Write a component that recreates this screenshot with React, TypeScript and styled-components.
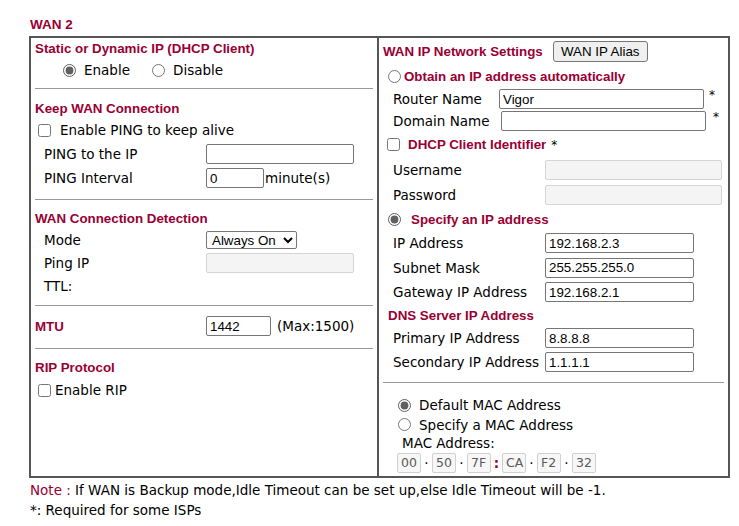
import styled, {createGlobalStyle} from "styled-components";

const GlobalStyle = createGlobalStyle`
  body {
    margin: 0;
    background: #ffffff;
    font-family: "DejaVu Sans", Verdana, sans-serif;
    font-size: 13.5px;
    color: #000000;
  }
  input[type="radio"], input[type="checkbox"] {
    margin: 0;
    width: 13px;
    height: 13px;
    accent-color: #5f5f5f;
  }
`;

const Page = styled.div`
  padding: 13px 0 0 29px;
  width: 701px;
`;

const Title = styled.div`
  font-family: "Liberation Sans", Arial, sans-serif;
  font-weight: bold;
  font-size: 13.5px;
  color: #990033;
  height: 23px;
  line-height: 23px;
  padding-left: 1px;
`;

const Table = styled.div`
  display: grid;
  grid-template-columns: 346px 1fr;
  border: 2px solid #565656;
`;

const LeftColumn = styled.div`
  display: flex;
  flex-direction: column;
`;

const RightColumn = styled.div`
  display: flex;
  flex-direction: column;
  border-left: 2px solid #565656;
  padding-bottom: 3px;
`;

const Section = styled.div<{$top?: number; $bottom?: number}>`
  display: flex;
  flex-direction: column;
  padding-top: ${(p) => p.$top ?? 0}px;
  padding-bottom: ${(p) => p.$bottom ?? 0}px;
`;

const Separator = styled.div<{$side?: number}>`
  height: 1px;
  background: #9a9a9a;
  margin: 0 ${(p) => p.$side ?? 4}px;
`;

const Heading = styled.div<{$pad?: number; $h?: number}>`
  font-family: "Liberation Sans", Arial, sans-serif;
  font-weight: bold;
  font-size: 13.33px;
  color: #990033;
  height: ${(p) => p.$h ?? 20}px;
  display: flex;
  align-items: center;
  padding-left: ${(p) => p.$pad ?? 4}px;
  gap: 4px;
`;

const Row = styled.div<{$h?: number; $pad?: number; $gap?: number}>`
  display: flex;
  align-items: center;
  height: ${(p) => p.$h ?? 24}px;
  padding-left: ${(p) => p.$pad ?? 13}px;
  gap: ${(p) => p.$gap ?? 0}px;
  white-space: nowrap;
`;

const Label = styled.span<{$w?: number}>`
  display: inline-block;
  width: ${(p) => (p.$w ? `${p.$w}px` : "auto")};
  flex: none;
`;

const Choice = styled.label<{$gap?: number}>`
  display: inline-flex;
  align-items: center;
  gap: ${(p) => p.$gap ?? 8}px;
`;

const BoldChoice = styled(Choice)`
  font-family: "Liberation Sans", Arial, sans-serif;
  font-weight: bold;
  font-size: 13.33px;
  color: #990033;
`;

const TextBox = styled.input<{$w: number; $h?: number}>`
  box-sizing: border-box;
  width: ${(p) => p.$w}px;
  height: ${(p) => p.$h ?? 20}px;
  border: 1px solid #767676;
  border-radius: 2px;
  padding: 0 3px;
  margin: 0;
  font-family: "Liberation Sans", Arial, sans-serif;
  font-size: 13.33px;
  color: #000;
  background: #fff;
  flex: none;

  &:disabled {
    background: #f4f4f4;
    border-color: #d4d4d4;
  }
`;

const Select = styled.select`
  box-sizing: border-box;
  width: 91px;
  height: 18px;
  margin: 0;
  padding: 0 0 0 1px;
  font-family: "Liberation Sans", Arial, sans-serif;
  font-size: 13.33px;
  border: 1px solid #767676;
  border-radius: 2px;
  background: #fff;
  color: #000;
`;

const AliasButton = styled.button`
  box-sizing: border-box;
  height: 21px;
  width: 95px;
  margin: 0;
  padding: 0;
  border: 1px solid #767676;
  border-radius: 3px;
  background: #efefef;
  font-family: "Liberation Sans", Arial, sans-serif;
  font-size: 13.33px;
  color: #000;
`;

const Star = styled.span<{$gap?: number; $raised?: boolean}>`
  margin-left: ${(p) => p.$gap ?? 5}px;
  font-size: 12px;
  position: relative;
  top: ${(p) => (p.$raised ? -4 : 0)}px;
`;

const Hint = styled.span<{$gap?: number}>`
  margin-left: ${(p) => p.$gap ?? 0}px;
`;

const MacRow = styled.div`
  display: flex;
  align-items: center;
  height: 21px;
  padding-left: 18px;
`;

const MacBox = styled.input`
  box-sizing: border-box;
  width: 24px;
  height: 20px;
  margin: 0;
  padding: 0 0 0 3px;
  border: 1px solid #d0d0d0;
  border-radius: 2px;
  background: #f7f7f7;
  color: #5a5a5a;
  font-family: "DejaVu Sans", Verdana, sans-serif;
  font-size: 12.5px;
`;

const MacSep = styled.span<{$red?: boolean}>`
  width: 11px;
  text-align: center;
  color: ${(p) => (p.$red ? "#990033" : "#000")};
  font-weight: ${(p) => (p.$red ? "bold" : "normal")};
`;

const Notes = styled.div`
  line-height: 20px;
  padding-top: 2px;
  padding-left: 1px;
`;

const NoteTag = styled.span`
  color: #990033;
`;

const macParts = ["00", "50", "7F", "CA", "F2", "32"];

export default function App() {
  return (
    <>
      <GlobalStyle />
      <Page>
        <Title>WAN 2</Title>
        <Table>
          <LeftColumn>
            <Section $bottom={7}>
              <Heading $h={21}>Static or Dynamic IP (DHCP Client)</Heading>
              <Row $h={22} $pad={32} $gap={22}>
                <Choice>
                  <input type="radio" name="dhcp" defaultChecked />
                  Enable
                </Choice>
                <Choice>
                  <input type="radio" name="dhcp" />
                  Disable
                </Choice>
              </Row>
            </Section>
            <Separator />
            <Section $top={9} $bottom={9}>
              <Heading>Keep WAN Connection</Heading>
              <Row $pad={7}>
                <Choice $gap={9}>
                  <input type="checkbox" />
                  Enable PING to keep alive
                </Choice>
              </Row>
              <Row>
                <Label $w={162}>PING to the IP</Label>
                <TextBox $w={148} $h={20} />
              </Row>
              <Row>
                <Label $w={162}>PING Interval</Label>
                <TextBox $w={58} defaultValue="0" />
                <Hint $gap={1}>minute(s)</Hint>
              </Row>
            </Section>
            <Separator />
            <Section $top={8} $bottom={8}>
              <Heading>WAN Connection Detection</Heading>
              <Row $h={23}>
                <Label $w={162}>Mode</Label>
                <Select defaultValue="on">
                  <option value="on">Always On</option>
                  <option value="ping">Ping Detect</option>
                </Select>
              </Row>
              <Row $h={23}>
                <Label $w={162}>Ping IP</Label>
                <TextBox $w={148} disabled />
              </Row>
              <Row $h={23}>
                <Label>TTL:</Label>
              </Row>
            </Section>
            <Separator />
            <Section $top={9} $bottom={11}>
              <Row $h={22} $pad={4}>
                <Heading as="span" $pad={0} style={{width: 171}}>
                  MTU
                </Heading>
                <TextBox $w={65} defaultValue="1442" />
                <Hint $gap={6}>(Max:1500)</Hint>
              </Row>
            </Section>
            <Separator />
            <Section $top={8}>
              <Heading $h={21}>RIP Protocol</Heading>
              <Row $pad={7}>
                <Choice $gap={4}>
                  <input type="checkbox" />
                  Enable RIP
                </Choice>
              </Row>
            </Section>
          </LeftColumn>

          <RightColumn>
            <Row $h={26} $pad={4} $gap={10}>
              <Heading as="span" $pad={0}>
                WAN IP Network Settings
              </Heading>
              <AliasButton>WAN IP Alias</AliasButton>
            </Row>
            <Row $pad={9}>
              <BoldChoice $gap={3}>
                <input type="radio" name="ipmode" />
                Obtain an IP address automatically
              </BoldChoice>
            </Row>
            <Row $h={22} $pad={14}>
              <Label $w={106}>Router Name</Label>
              <TextBox $w={205} defaultValue="Vigor" />
              <Star $raised>*</Star>
            </Row>
            <Row $h={22} $pad={14}>
              <Label $w={108}>Domain Name</Label>
              <TextBox $w={205} />
              <Star $raised $gap={7}>
                *
              </Star>
            </Row>
            <Row $h={25} $pad={8}>
              <BoldChoice>
                <input type="checkbox" />
                DHCP Client Identifier
              </BoldChoice>
              <Star>*</Star>
            </Row>
            <Row $h={25} $pad={14}>
              <Label $w={152}>Username</Label>
              <TextBox $w={177} disabled />
            </Row>
            <Row $h={25} $pad={14}>
              <Label $w={152}>Password</Label>
              <TextBox $w={177} disabled />
            </Row>
            <Row $pad={9}>
              <BoldChoice $gap={10}>
                <input type="radio" name="ipmode" defaultChecked />
                Specify an IP address
              </BoldChoice>
            </Row>
            <Row $pad={14}>
              <Label $w={152}>IP Address</Label>
              <TextBox $w={149} defaultValue="192.168.2.3" />
            </Row>
            <Row $h={25} $pad={14}>
              <Label $w={152}>Subnet Mask</Label>
              <TextBox $w={149} defaultValue="255.255.255.0" />
            </Row>
            <Row $pad={14}>
              <Label $w={152}>Gateway IP Address</Label>
              <TextBox $w={149} defaultValue="192.168.2.1" />
            </Row>
            <Heading $h={22} $pad={9}>
              DNS Server IP Address
            </Heading>
            <Row $pad={14}>
              <Label $w={152}>Primary IP Address</Label>
              <TextBox $w={149} defaultValue="8.8.8.8" />
            </Row>
            <Row $pad={14}>
              <Label $w={152}>Secondary IP Address</Label>
              <TextBox $w={149} defaultValue="1.1.1.1" />
            </Row>
            <Section $top={8}>
              <Separator $side={4} />
            </Section>
            <Section $top={12}>
              <Row $h={20} $pad={19}>
                <Choice>
                  <input type="radio" name="mac" defaultChecked />
                  Default MAC Address
                </Choice>
              </Row>
              <Row $h={19} $pad={19}>
                <Choice>
                  <input type="radio" name="mac" />
                  Specify a MAC Address
                </Choice>
              </Row>
              <Row $h={18} $pad={23}>
                <Label>MAC Address:</Label>
              </Row>
              <MacRow>
                {macParts.map((part, i) => (
                  <span key={part} style={{display: "contents"}}>
                    {i > 0 && <MacSep $red={i === 3}>{i === 3 ? ":" : "·"}</MacSep>}
                    <MacBox defaultValue={part} disabled />
                  </span>
                ))}
              </MacRow>
            </Section>
          </RightColumn>
        </Table>
        <Notes>
          <div>
            <NoteTag>Note :</NoteTag> If WAN is Backup mode,Idle Timeout can be
            set up,else Idle Timeout will be -1.
          </div>
          <div>*: Required for some ISPs</div>
        </Notes>
      </Page>
    </>
  );
}
